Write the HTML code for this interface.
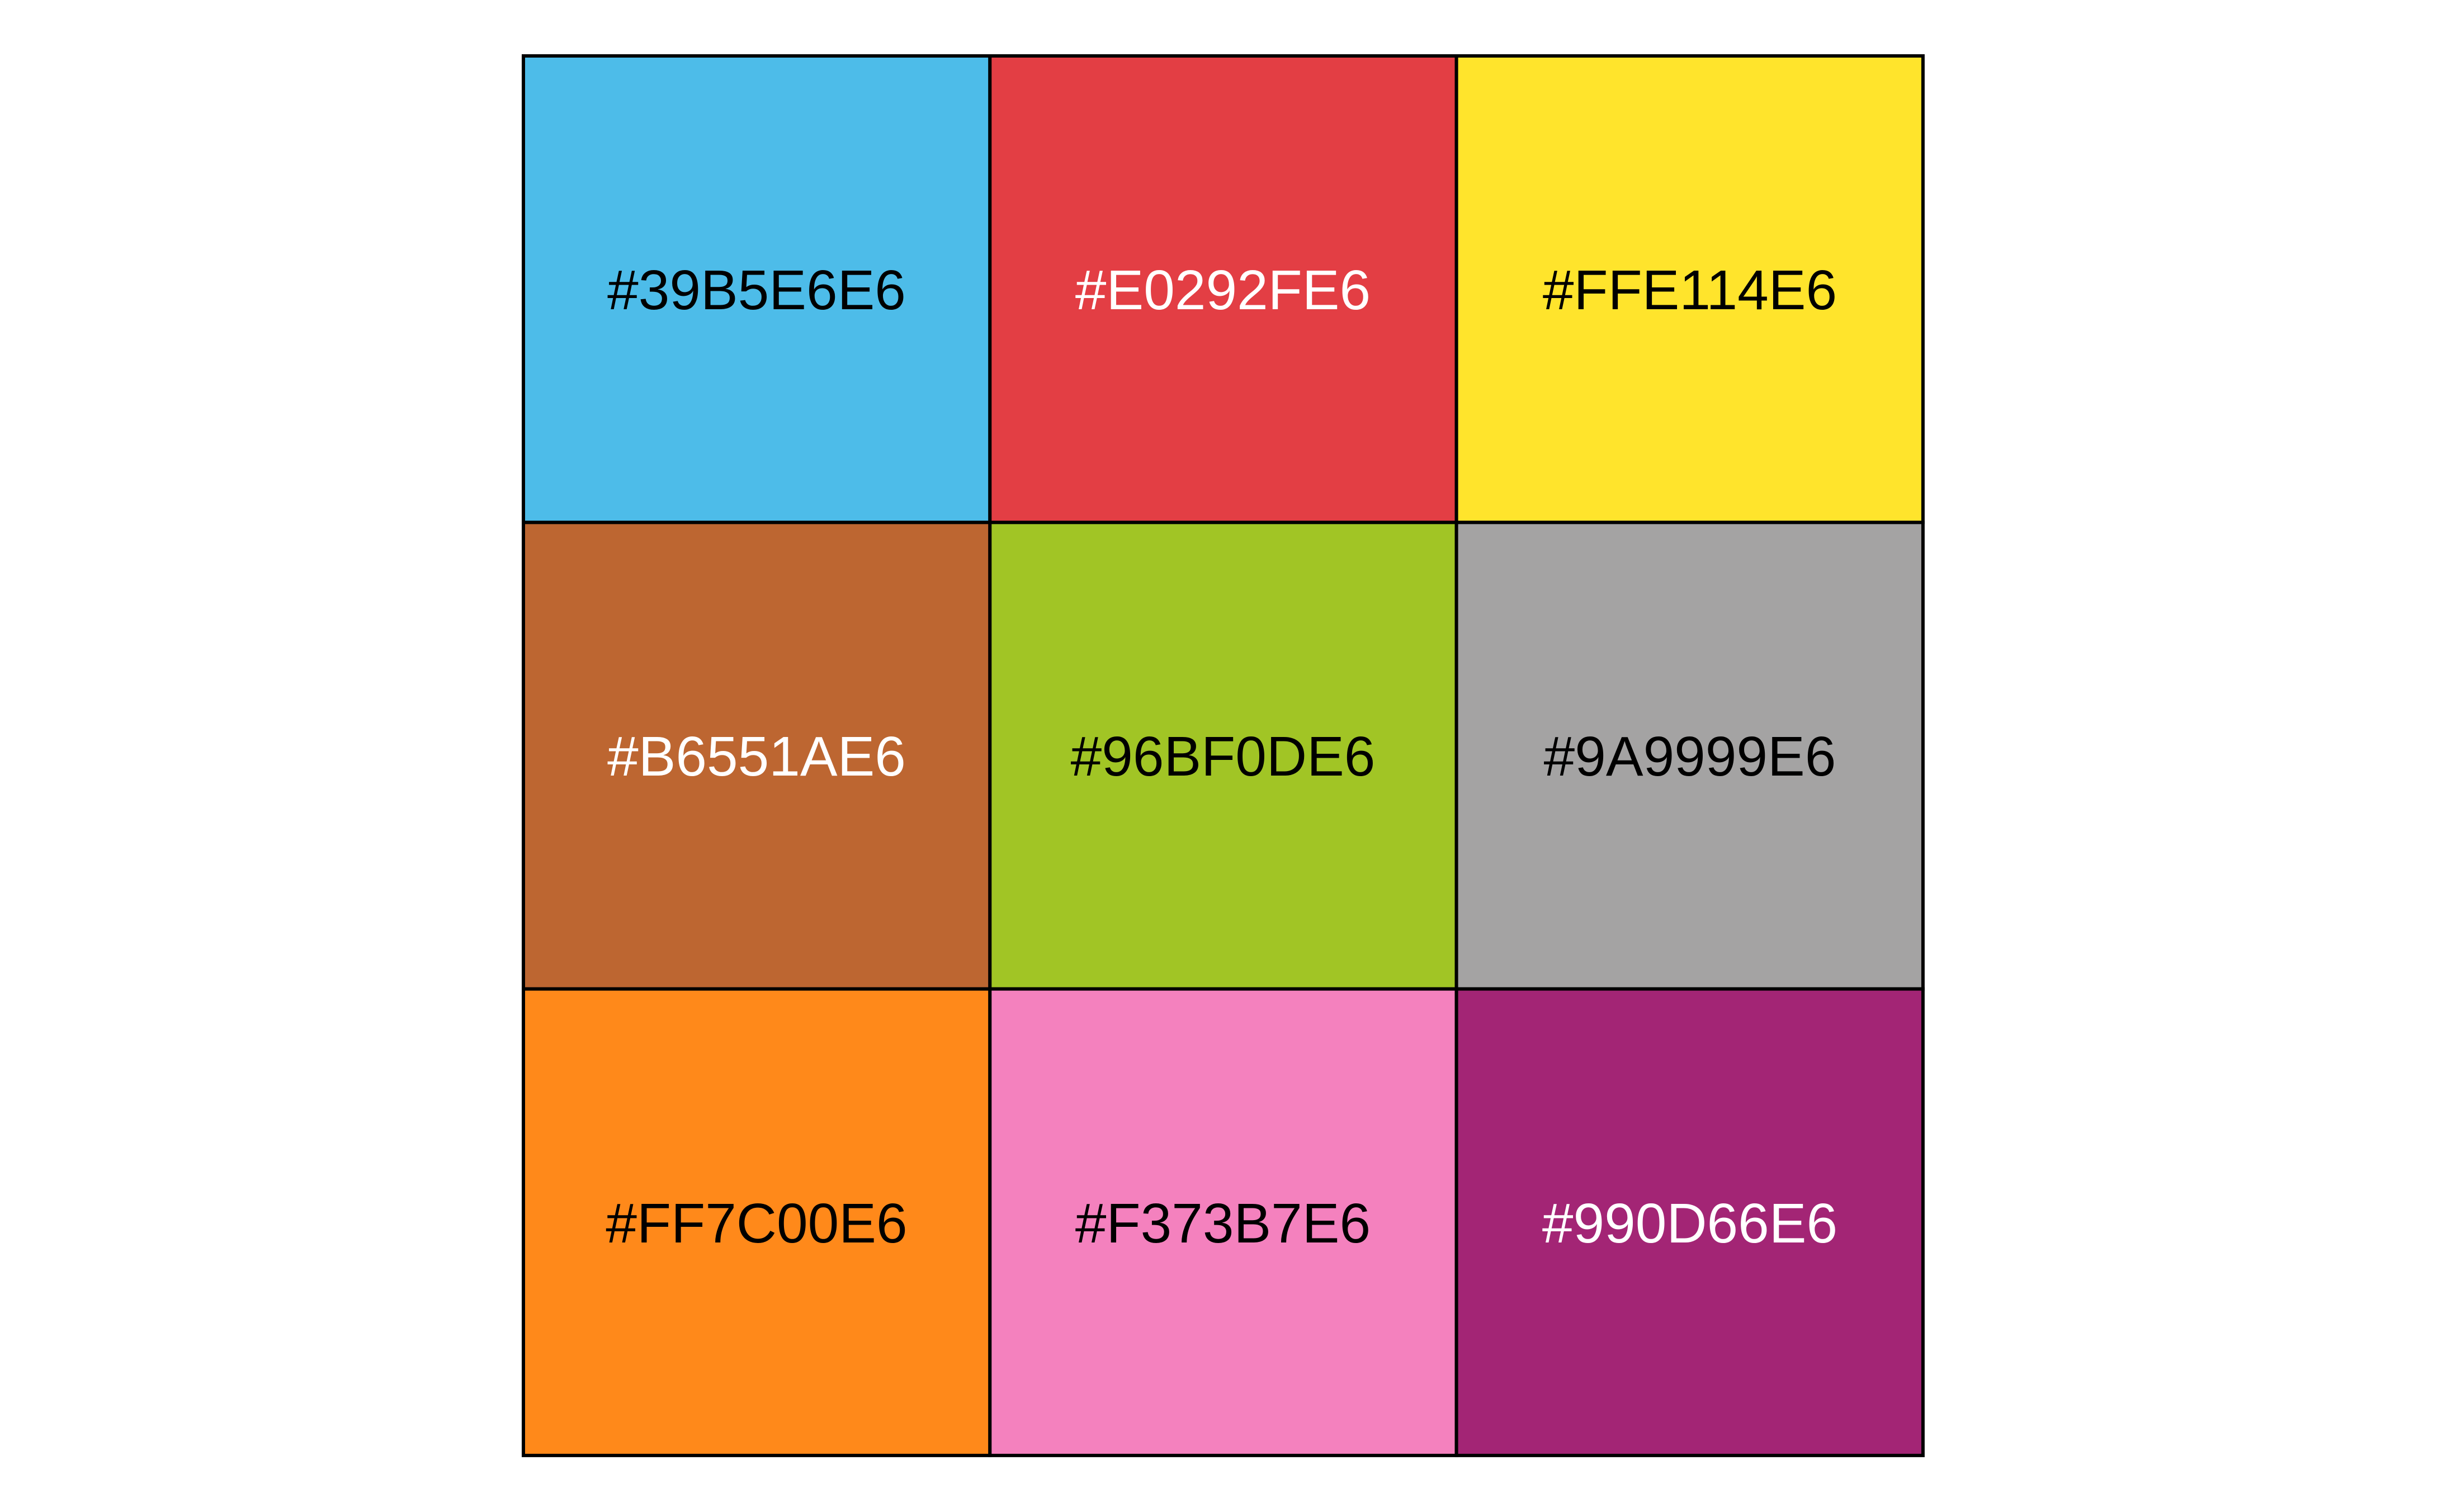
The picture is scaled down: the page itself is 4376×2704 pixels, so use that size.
<!DOCTYPE html>
<html><head><meta charset="utf-8"><style>
html,body{margin:0;padding:0;background:#fff;width:4376px;height:2704px;overflow:hidden}
</style></head><body>
<svg width="4376" height="2704" xmlns="http://www.w3.org/2000/svg" font-family="Liberation Sans, Arial, sans-serif" font-size="100" text-anchor="middle">
<g stroke="#000" stroke-width="6">
<rect x="936" y="100" width="834.3" height="834.3" fill="#4DBCE9"/>
<rect x="1770.3" y="100" width="834.3" height="834.3" fill="#E33E44"/>
<rect x="2604.6" y="100" width="834.3" height="834.3" fill="#FFE42C"/>
<rect x="936" y="934.3" width="834.3" height="834.3" fill="#BD6631"/>
<rect x="1770.3" y="934.3" width="834.3" height="834.3" fill="#A1C525"/>
<rect x="2604.6" y="934.3" width="834.3" height="834.3" fill="#A4A3A3"/>
<rect x="936" y="1768.6" width="834.3" height="834.3" fill="#FF891A"/>
<rect x="1770.3" y="1768.6" width="834.3" height="834.3" fill="#F481BE"/>
<rect x="2604.6" y="1768.6" width="834.3" height="834.3" fill="#A32575"/>
</g>
<text x="1353" y="553" fill="#000">#39B5E6E6</text>
<text x="2187" y="553" fill="#fff">#E0292FE6</text>
<text x="3022" y="553" fill="#000">#FFE114E6</text>
<text x="1353" y="1387" fill="#fff">#B6551AE6</text>
<text x="2187" y="1387" fill="#000">#96BF0DE6</text>
<text x="3022" y="1387" fill="#000">#9A9999E6</text>
<text x="1353" y="2222" fill="#000">#FF7C00E6</text>
<text x="2187" y="2222" fill="#000">#F373B7E6</text>
<text x="3022" y="2222" fill="#fff">#990D66E6</text>
</svg>
</body></html>
